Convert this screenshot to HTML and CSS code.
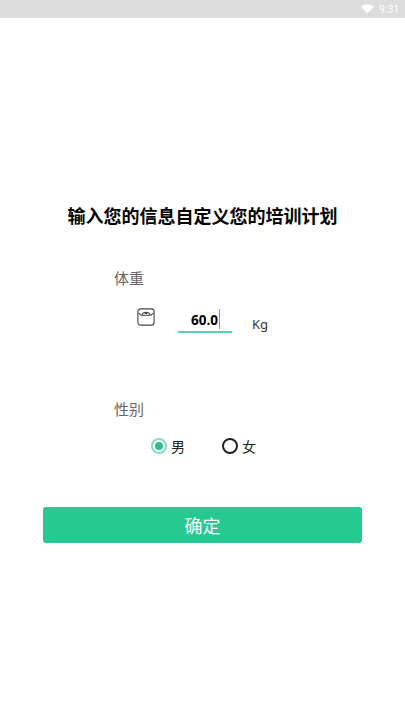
FILE: index.html
```html
<!DOCTYPE html>
<html lang="zh-CN">
<head>
    <meta charset="UTF-8">
    <meta name="viewport" content="width=device-width, initial-scale=1.0">
    <title>培训计划</title>
    <link rel="stylesheet" href="styles.css">
</head>
<body>
    <div class="status-bar">
        <svg class="wifi" viewBox="0 0 14 11"><path d="M0 3.2C3.8-.6 10.200-.6 14 3.200L7 10.500z" fill="#fff"/></svg>
        <span class="clock">9:31</span>
    </div>
    <div class="page">
        <h1 class="title">输入您的信息自定义您的培训计划</h1>

        <div class="label weight-label">体重</div>
        <div class="weight-row">
            <svg class="scale-icon" viewBox="0 0 20 20" fill="none" stroke="#444" stroke-width="1.200">
                <rect x="1" y="1" width="18" height="18" rx="3"/>
                <path d="M1.500 5.500L4.500 8H15.500L18.500 5.500"/>
                <path d="M5.500 7.500C6.500 3.800 13.500 3.800 14.500 7.500"/>
                <path d="M8.500 5.800h3" stroke-width="1.800"/>
            </svg>
            <div class="weight-input"><span class="weight-value">60.0</span><span class="caret"></span></div>
            <span class="unit">Kg</span>
        </div>

        <div class="label gender-label">性别</div>
        <div class="gender-row">
            <div class="radio-item">
                <span class="radio radio-on"><span class="radio-dot"></span></span>
                <span class="radio-text">男</span>
            </div>
            <div class="radio-item">
                <span class="radio radio-off"></span>
                <span class="radio-text">女</span>
            </div>
        </div>

        <button class="confirm">确定</button>
    </div>
</body>
</html>
```

FILE: styles.css
```css
* {
    box-sizing: border-box;
}

body {
    margin: 0;
    height: 720px;
    background: #fff;
    font-family: "Noto Sans CJK SC", "Noto Sans", sans-serif;
    color: #000;
    overflow: hidden;
}

.status-bar {
    height: 18px;
    background: #dcdcdc;
    display: flex;
    align-items: center;
    justify-content: flex-end;
    padding-right: 6px;
    gap: 5px;
}

.wifi {
    width: 13px;
    height: 10px;
}

.clock {
    font-family: Roboto, sans-serif;
    font-size: 10.500px;
    color: #fff;
    width: 20px;
}

.page {
    display: flex;
    flex-direction: column;
}

.title {
    margin: 185px 0 0;
    font-size: 18px;
    line-height: 24px;
    font-weight: 700;
    text-align: center;
}

.label {
    font-size: 15px;
    line-height: 22px;
    color: #666;
    margin-left: 114px;
}

.weight-label {
    margin-top: 40px;
}

.weight-row {
    display: flex;
    align-items: flex-start;
    margin: 19px 0 0 137px;
    height: 42px;
}

.scale-icon {
    width: 18px;
    height: 18px;
}

.weight-input {
    width: 54px;
    height: 25px;
    margin-left: 23px;
    border-bottom: 2px solid #5fcfae;
    display: flex;
    justify-content: center;
    align-items: center;
    padding-left: 1px;
}

.weight-value {
    font-family: "Open Sans", sans-serif;
    font-size: 13.500px;
    font-weight: 700;
}

.caret {
    width: 1px;
    height: 20px;
    background: #26c98f;
    margin: -2px 0 0 1px;
}

.unit {
    font-family: "Noto Sans", sans-serif;
    font-size: 13px;
    line-height: 18px;
    color: #333;
    margin: 7px 0 0 20px;
}

.gender-label {
    margin-top: 48px;
}

.gender-row {
    display: flex;
    gap: 37px;
    margin: 16px 0 0 151px;
}

.radio-item {
    display: flex;
    align-items: center;
    gap: 4px;
    height: 20px;
}

.radio {
    width: 16px;
    height: 16px;
    border-radius: 50%;
    display: flex;
    align-items: center;
    justify-content: center;
}

.radio-on {
    border: 2px solid #8adcc3;
}

.radio-dot {
    width: 8px;
    height: 8px;
    border-radius: 50%;
    background: #2fbf8c;
}

.radio-off {
    border: 2px solid #222;
}

.radio-text {
    font-size: 14px;
    color: #222;
}

.confirm {
    width: 319px;
    height: 36px;
    margin: 51px 0 0 43px;
    padding-bottom: 2px;
    border: none;
    border-radius: 3px;
    background: #26c98f;
    color: #fff;
    font-family: inherit;
    font-size: 18px;
}
```
